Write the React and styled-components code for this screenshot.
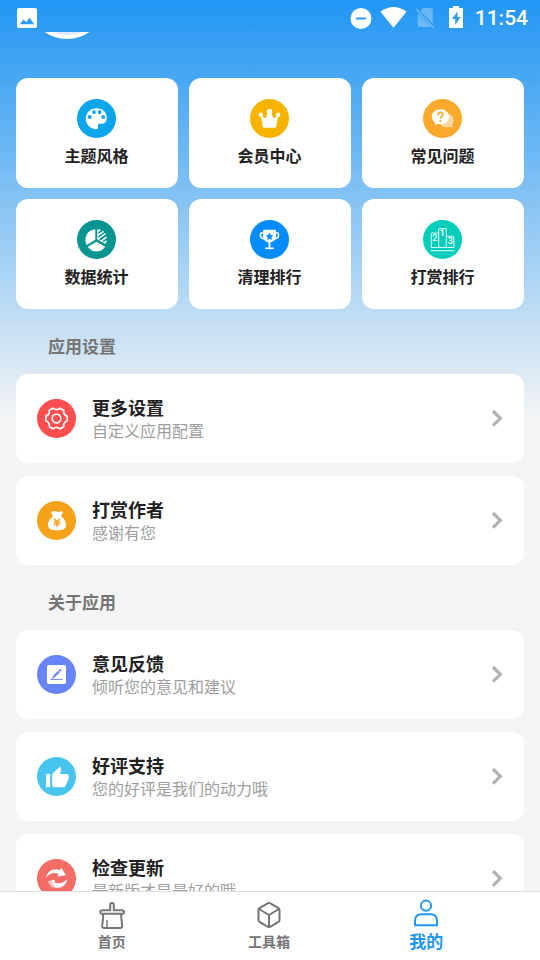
import React from 'react';
import styled, { createGlobalStyle } from 'styled-components';

const GlobalStyle = createGlobalStyle`
  * {
    box-sizing: border-box;
  }
  body {
    margin: 0;
    font-family: Roboto, 'Noto Sans CJK SC', sans-serif;
    color: #212121;
  }
  button {
    font: inherit;
    color: inherit;
    border: 0;
    margin: 0;
    cursor: pointer;
  }
  svg {
    display: block;
    flex: none;
  }
`;

const StyledApp = styled.div`
  height: 100vh;
  display: flex;
  flex-direction: column;
  background: linear-gradient(#2196f3, #f4f4f4 420px);
`;

const StyledStatusBar = styled.header`
  flex: none;
  height: 32px;
  padding: 4px 12px 0 16px;
  display: flex;
  align-items: center;
  color: #fff;
`;

const StyledStatusIcons = styled.div`
  margin-left: auto;
  margin-right: 12px;
  display: flex;
  align-items: center;
  gap: 8px;
`;

const StyledTime = styled.time`
  font-size: 21px;
  font-weight: 500;
  line-height: 24px;
`;

const StyledContent = styled.main`
  flex: 1;
  min-height: 0;
  overflow-y: auto;
  scrollbar-width: none;
  padding: 0 16px;
`;

// The profile header is scrolled almost out of view
const StyledProfile = styled.div`
  margin-top: -71px;
  padding: 0 12px 39px;
`;

const StyledAvatar = styled.div`
  width: 78px;
  height: 78px;
  border-radius: 50%;
  border: 4px solid #fff;
  background-color: #dfe8fc;
`;

const StyledGrid = styled.div`
  display: grid;
  grid-template-columns: repeat(3, 1fr);
  gap: 11px;
`;

const StyledTile = styled.button`
  height: 110px;
  padding: 21px 1px 0 0;
  display: flex;
  flex-direction: column;
  align-items: center;
  gap: 7px;
  border-radius: 12px;
  background-color: #fff;
  font-size: 16px;
  font-weight: 700;
  line-height: 24px;
`;

const StyledSectionTitle = styled.h2`
  margin: 0;
  padding: 26px 32px 15px;
  font-size: 17px;
  font-weight: 700;
  line-height: 24px;
  color: #757575;
`;

const StyledList = styled.div`
  display: flex;
  flex-direction: column;
  gap: 13px;
`;

const StyledRow = styled.button`
  height: 89px;
  padding: 0 21px;
  display: flex;
  align-items: center;
  gap: 16px;
  border-radius: 12px;
  background-color: #fff;
  text-align: left;
`;

const StyledRowText = styled.span`
  flex: 1;
  padding-top: 2px;
  display: flex;
  flex-direction: column;
`;

const StyledRowTitle = styled.span`
  font-size: 18px;
  font-weight: 700;
  line-height: 24px;
`;

const StyledRowHint = styled.span`
  font-size: 16px;
  line-height: 22px;
  color: #9e9e9e;
`;

const StyledNav = styled.nav`
  flex: none;
  height: 69px;
  padding: 0 35px 0 33px;
  display: flex;
  border-top: 1px solid #e0e0e0;
  background-color: #fff;
`;

const StyledNavItem = styled.a`
  flex: 1;
  padding-top: ${({ $active }) => ($active ? '6px' : '9px')};
  display: flex;
  flex-direction: column;
  align-items: center;
  gap: 1px;
  color: ${({ $active }) => ($active ? '#2196f3' : '#757575')};
  font-size: ${({ $active }) => ($active ? '17px' : '14px')};
  font-weight: 700;
  line-height: ${({ $active }) => ($active ? '26px' : '24px')};
  text-decoration: none;
`;

const Badge = ({ color, children }) => (
  <svg width="39" height="39" viewBox="0 0 39 39" aria-hidden="true">
    <circle cx="19.5" cy="19.5" r="19.5" fill={color} />
    {children}
  </svg>
);

const ThemeIcon = () => (
  <Badge color="#0aa5ea">
    <path
      fill="#fff"
      d="M19.5 9.2c6 0 10.300 4 10.300 9.600 0 3.800-2 6-5 6h-2.300c-1.300 0-1.700.8-1.500 2 .3 1.800 0 3.500-1.600 3.500C13.400 30 8.700 25.600 8.700 19.600c0-6 4.700-10.400 10.800-10.400z"
    />
    <g fill="#0aa5ea">
      <circle cx="12.800" cy="18" r="1.900" />
      <ellipse cx="17" cy="13.200" rx="1.700" ry="2.100" />
      <ellipse cx="22.600" cy="13.200" rx="1.700" ry="2.100" />
      <circle cx="26.200" cy="18" r="1.900" />
    </g>
  </Badge>
);

const CrownIcon = () => (
  <Badge color="#f6b400">
    <g fill="#fff">
      <circle cx="10.800" cy="15.800" r="2.200" />
      <circle cx="19.500" cy="12.400" r="2.700" />
      <circle cx="28.200" cy="15.800" r="2.200" />
      <path d="M10.800 16.500l4.700 2.700 2.500-5.700h3l2.500 5.700 4.700-2.700-2 11.200q-.2 1.100-1.300 1.100H14.100q-1.100 0-1.300-1.100z" />
    </g>
  </Badge>
);

const FaqIcon = () => (
  <Badge color="#fba92c">
    <path
      fill="#fdd8a2"
      d="M23.500 14.800c4.200 0 7.300 2.900 7.300 6.600 0 1.900-.8 3.400-1.900 4.600l1.500 2.600-3.900-.7c-4.400 1.100-9.300-.7-10.500-4.400z"
    />
    <path
      fill="#fff"
      d="M17.400 10.200c4.900 0 8.700 3.300 8.700 7.500s-3.800 7.500-8.700 7.500c-1 0-1.900-.1-2.700-.4l-2.600 1.200-.1-2.500c-2-1.300-3.300-3.400-3.300-5.800 0-4.200 3.800-7.500 8.700-7.500z"
    />
    <path
      d="M14.900 16.200c0-3.700 5.300-3.500 5.100-.4-.1 1.900-2.600 1.800-2.600 4"
      fill="none"
      stroke="#fba92c"
      strokeWidth="1.700"
    />
    <circle cx="17.400" cy="22" r="1.100" fill="#fba92c" />
  </Badge>
);

const StatsIcon = () => (
  <Badge color="#079592">
    <path fill="#fff" d="M18.300 9.200v10.600l-8.500 5.300A10.600 10.600 0 0 1 18.300 9.200z" />
    <path fill="#fff" d="M19.500 21.800l8.700 5a10.600 10.600 0 0 1-17.400 0z" />
    <path
      d="M20.800 9.300v9.900l8 4.300"
      fill="none"
      stroke="#fff"
      strokeWidth="1"
    />
    <path
      d="M20.800 11.500l2.500-1.800M20.800 15.300l5.700-4M20.800 19l7.700-5.400M24 21.200l5.500-4M27 22.800l2.600-1.900"
      stroke="#fff"
      strokeWidth="1.500"
    />
  </Badge>
);

const TrophyIcon = () => (
  <Badge color="#048cfc">
    <g fill="none" stroke="#fff" strokeWidth="1.600">
      <path d="M14 13h-2.500q-1 0-1 1v1.500q0 2.800 4.200 3.500M25 13h2.500q1 0 1 1v1.500q0 2.800-4.200 3.500" />
      <path d="M15.200 28.300h8.600" />
    </g>
    <path
      fill="#fff"
      d="M14 9.800h11q1 0 1 1v5c0 3.500-2 6-5.600 6.700V28h-1.800v-5.500C15 21.800 13 19.300 13 15.800v-5q0-1 1-1z"
    />
    <path
      fill="#048cfc"
      d="M19.500 12.600l1.200 2.500 2.700.3-2 1.900.5 2.700-2.400-1.300-2.400 1.300.5-2.700-2-1.900 2.700-.3z"
    />
  </Badge>
);

const PodiumIcon = () => (
  <Badge color="#04cdb9">
    <g fill="none" stroke="#d5fff9" strokeWidth="1.100">
      <path d="M15.700 27.500H8.300V14q0-1 1-1h6.400M23.300 16.200h6.500q1 0 1 1v10.300h-7.500" />
      <rect x="15.700" y="8.500" width="7.600" height="19" rx="1" />
      <path d="M8 30.700h23" />
    </g>
    <g fill="#fff" fontSize="9" fontWeight="500" textAnchor="middle">
      <text x="11.800" y="20.800">2</text>
      <text x="19.300" y="16.300">1</text>
      <text x="27.200" y="24">3</text>
    </g>
  </Badge>
);

const GearIcon = () => (
  <Badge color="#fe4e4e">
    <g fill="none" stroke="#fff" strokeWidth="1.700" strokeLinejoin="round">
      <path d="M16 9.200Q19.500 12.200 23 9.200L26.700 11.300Q26 15.500 30.200 17.200V21.800Q26 23.500 26.700 27.700L23 29.800Q19.500 26.800 16 29.800L12.300 27.700Q13 23.500 8.800 21.800V17.200Q13 15.500 12.300 11.300Z" />
      <circle cx="19.500" cy="19.500" r="4.300" />
    </g>
  </Badge>
);

const MoneyBagIcon = () => (
  <Badge color="#f5a218">
    <path
      fill="#fff"
      d="M15.500 10.400q2-.9 4 0 2 .8 4 0 2.300-.7 2.300 1.300l-1.700 3.900c3.200 2 5 5.400 5 8.400 0 3.700-2.800 5.400-9.100 5.400s-9.100-1.700-9.100-5.400c0-3 1.800-6.400 5-8.400l-1.600-3.500q-.4-1.300 1.200-1.700z"
    />
    <path
      d="M17.300 17.700l2.700 3 2.700-3M16.800 21h6.400M16.800 23.300h6.400M20 20.500v5.800"
      fill="none"
      stroke="#f5a218"
      strokeWidth="1.400"
    />
  </Badge>
);

const FeedbackIcon = () => (
  <Badge color="#6885f8">
    <rect x="10" y="10" width="19" height="19" rx="1.800" fill="#fff" />
    <path
      d="M17 21.500l5-5M22.500 16l1.400-1.400"
      stroke="#6885f8"
      strokeWidth="2.400"
    />
    <path fill="#6885f8" d="M15.800 20.800l1.900 1.900-2.900 1z" />
    <path d="M13.500 24.400h12" stroke="#6885f8" strokeWidth="1" />
  </Badge>
);

const ThumbIcon = () => (
  <Badge color="#48c5ef">
    <path
      fill="#fff"
      transform="translate(8 8.700) scale(1.030)"
      d="M1 21h4V8H1v13zm22-11c0-1.100-.9-2-2-2h-6.310l.95-4.570.03-.32c0-.41-.17-.79-.44-1.060L14.170 1 7.590 7.590C7.220 7.950 7 8.450 7 9v10c0 1.100.9 2 2 2h9c.83 0 1.540-.5 1.840-1.220l3.020-7.050c.09-.23.14-.47.14-.73v-2z"
    />
  </Badge>
);

const UpdateIcon = () => (
  <Badge color="#f36c65">
    <path
      fill="#fff"
      d="M9 18.500C10 12.500 16.500 8.500 23 11l1.300-2.200L29 16.300l-8.700 1.100 1.200-2.400C17.500 13 12.500 14.500 9 18.500z"
    />
    <path
      fill="#fff"
      d="M30.200 20.300C29.500 26.500 23 30.500 17 28.300l-3-5.500-3.700-.6 7.700-1.500-.6 2.800c4 1.700 9 .7 12.800-3.200z"
    />
    <path fill="#fbc9c5" d="M10.300 22.200l5 .3 2 4-1.800 2.700z" />
  </Badge>
);

const Chevron = () => (
  <svg width="12" height="18" viewBox="0 0 12 18" aria-hidden="true">
    <path
      d="M2 1l7.300 7.300L2 15.600"
      fill="none"
      stroke="#b3b3b3"
      strokeWidth="3.300"
    />
  </svg>
);

const HomeIcon = () => (
  <svg width="28" height="28" viewBox="0 0 28 28" aria-hidden="true">
    <g fill="none" stroke="currentColor" strokeWidth="2" strokeLinejoin="round">
      <path d="M12.200 9.300V3.500q0-1.500 1.800-1.500t1.800 1.500v5.800h7.700q2.500 0 2.500 1.500v.7q0 1.300-1.500 1.300H3.800q-1.500 0-1.500-1.300v-.7q0-1.500 2.500-1.500z" />
      <path d="M5 13c.6 3.500-.3 7.500-.8 11.500q-.3 2.500 2 2.500h16q2.300 0 2-2.500c-.5-4-1.400-8-.8-11.500" />
      <path d="M9 19v7.500" strokeWidth="1.500" />
    </g>
  </svg>
);

const ToolboxIcon = () => (
  <svg width="28" height="28" viewBox="0 0 28 28" aria-hidden="true">
    <g fill="none" stroke="currentColor" strokeWidth="2" strokeLinejoin="round">
      <path d="M13 2.200q1-.6 2 0l8.500 5q1 .6 1 1.800v10q0 1.200-1 1.800l-8.500 5q-1 .6-2 0l-8.500-5q-1-.6-1-1.800V9q0-1.200 1-1.800z" />
      <path d="M4 8l10 6 10-6M14 14v12" />
    </g>
  </svg>
);

const MineIcon = () => (
  <svg width="28" height="30" viewBox="0 0 28 30" aria-hidden="true">
    <g fill="none" stroke="currentColor" strokeWidth="2">
      <circle cx="14" cy="7.700" r="5.100" />
      <path d="M3 27.200v-4.500q0-6.500 6.500-6.500h9q6.500 0 6.500 6.500v4.500z" />
    </g>
  </svg>
);

const PictureIcon = () => (
  <svg width="22" height="20" viewBox="0 0 22 20" aria-hidden="true">
    <path
      fill="currentColor"
      fillRule="evenodd"
      d="M3 0h16q2 0 2 2v16q0 2-2 2H3q-2 0-2-2V2q0-2 2-2zm.8 16.200h14.400l-4.700-6.400-3.300 4.500-2.700-2.800z"
    />
  </svg>
);

const DoNotDisturbIcon = () => (
  <svg width="22" height="22" viewBox="0 0 22 22" aria-hidden="true">
    <circle cx="11" cy="11.500" r="10.500" fill="currentColor" />
    <path d="M6 11.500h10" stroke="#2b98f3" strokeWidth="2" />
  </svg>
);

const WifiIcon = () => (
  <svg width="27" height="22" viewBox="0 0 27 22" aria-hidden="true">
    <path fill="currentColor" d="M.5 4.700q13-9.200 26 0L13.500 20.700z" />
  </svg>
);

const NoSimIcon = () => (
  <svg width="26" height="22" viewBox="0 0 26 22" aria-hidden="true">
    <g opacity="0.300">
      <path
        fill="currentColor"
        d="M7.800 1H16q1.700 0 1.700 1.700v13.800L5.300 4zM2.700 6.200L16.500 20H4.400q-1.700 0-1.700-1.700z"
      />
      <path d="M1 2l18 19" stroke="currentColor" strokeWidth="1.600" />
    </g>
  </svg>
);

const BatteryIcon = () => (
  <svg width="14" height="24" viewBox="0 0 14 24" aria-hidden="true">
    <path
      fill="currentColor"
      fillRule="evenodd"
      d="M4 0h6v2h4v20H0V2h4zm4.500 5.500L3 13h3.200v6L11.500 11H8.300z"
    />
  </svg>
);

const tiles = [
  { label: '主题风格', Icon: ThemeIcon },
  { label: '会员中心', Icon: CrownIcon },
  { label: '常见问题', Icon: FaqIcon },
  { label: '数据统计', Icon: StatsIcon },
  { label: '清理排行', Icon: TrophyIcon },
  { label: '打赏排行', Icon: PodiumIcon },
];

const sections = [
  {
    title: '应用设置',
    rows: [
      { title: '更多设置', hint: '自定义应用配置', Icon: GearIcon },
      { title: '打赏作者', hint: '感谢有您', Icon: MoneyBagIcon },
    ],
  },
  {
    title: '关于应用',
    rows: [
      { title: '意见反馈', hint: '倾听您的意见和建议', Icon: FeedbackIcon },
      { title: '好评支持', hint: '您的好评是我们的动力哦', Icon: ThumbIcon },
      { title: '检查更新', hint: '最新版才是最好的哦', Icon: UpdateIcon },
    ],
  },
];

const tabs = [
  { label: '首页', href: '#home', Icon: HomeIcon },
  { label: '工具箱', href: '#tools', Icon: ToolboxIcon },
  { label: '我的', href: '#mine', Icon: MineIcon, active: true },
];

const App = () => {
  return (
    <StyledApp>
      <GlobalStyle />
      <StyledStatusBar>
        <PictureIcon />
        <StyledStatusIcons>
          <DoNotDisturbIcon />
          <WifiIcon />
          <NoSimIcon />
          <BatteryIcon />
        </StyledStatusIcons>
        <StyledTime>11:54</StyledTime>
      </StyledStatusBar>
      <StyledContent>
        <StyledProfile>
          <StyledAvatar />
        </StyledProfile>
        <StyledGrid>
          {tiles.map(({ label, Icon }) => (
            <StyledTile key={label} type="button">
              <Icon />
              {label}
            </StyledTile>
          ))}
        </StyledGrid>
        {sections.map(({ title, rows }) => (
          <section key={title}>
            <StyledSectionTitle>{title}</StyledSectionTitle>
            <StyledList>
              {rows.map(({ title: name, hint, Icon }) => (
                <StyledRow key={name} type="button">
                  <Icon />
                  <StyledRowText>
                    <StyledRowTitle>{name}</StyledRowTitle>
                    <StyledRowHint>{hint}</StyledRowHint>
                  </StyledRowText>
                  <Chevron />
                </StyledRow>
              ))}
            </StyledList>
          </section>
        ))}
      </StyledContent>
      <StyledNav>
        {tabs.map(({ label, href, Icon, active }) => (
          <StyledNavItem
            key={label}
            href={href}
            $active={active}
            aria-current={active ? 'page' : undefined}
          >
            <Icon />
            {label}
          </StyledNavItem>
        ))}
      </StyledNav>
    </StyledApp>
  );
};

export default App;
